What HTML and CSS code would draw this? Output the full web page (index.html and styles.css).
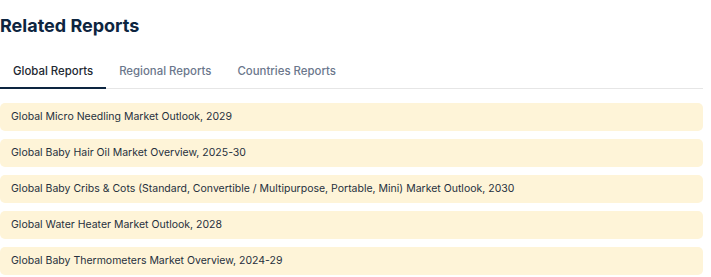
FILE: index.html
```html
<!DOCTYPE html>
<html>
<head>
<meta charset="utf-8">
<link rel="stylesheet" href="styles.css">
</head>
<body>
<section class="related">
  <h2 class="title">Related Reports</h2>
  <nav class="tabs">
    <a class="tab active">Global Reports</a>
    <a class="tab">Regional Reports</a>
    <a class="tab">Countries Reports</a>
  </nav>
  <ul class="list">
    <li class="item">Global Micro Needling Market Outlook, 2029</li>
    <li class="item">Global Baby Hair Oil Market Overview, 2025-30</li>
    <li class="item">Global Baby Cribs &amp; Cots (Standard, Convertible / Multipurpose, Portable, Mini) Market Outlook, 2030</li>
    <li class="item">Global Water Heater Market Outlook, 2028</li>
    <li class="item">Global Baby Thermometers Market Overview, 2024-29</li>
  </ul>
</section>
</body>
</html>
```
FILE: styles.css
```css
html, body {
  margin: 0;
  padding: 0;
  background: #ffffff;
}
body {
  font-family: Inter, "Noto Sans", sans-serif;
}
.related {
  width: 703px;
  padding-top: 14px;
}
.title {
  margin: 0;
  font-size: 18px;
  line-height: 24px;
  font-weight: 700;
  color: #0d2540;
}
.tabs {
  display: flex;
  margin-top: 19px;
  border-bottom: 1px solid #e6e6e6;
}
.tab {
  padding: 0 13px;
  height: 32px;
  line-height: 28px;
  font-size: 11.4px;
  font-weight: 500;
  color: #6b778c;
  border-bottom: 2px solid transparent;
  margin-bottom: -1px;
  box-sizing: border-box;
}
.tab.active {
  color: #222831;
  border-bottom-color: #0d2540;
}
.list {
  list-style: none;
  margin: 14px 0 0;
  padding: 0;
  display: flex;
  flex-direction: column;
  gap: 8px;
}
.item {
  height: 28px;
  line-height: 28px;
  padding: 0 11px;
  background: #fef4d8;
  border-radius: 5px;
  font-size: 10.5px;
  color: #26303d;
}
```
